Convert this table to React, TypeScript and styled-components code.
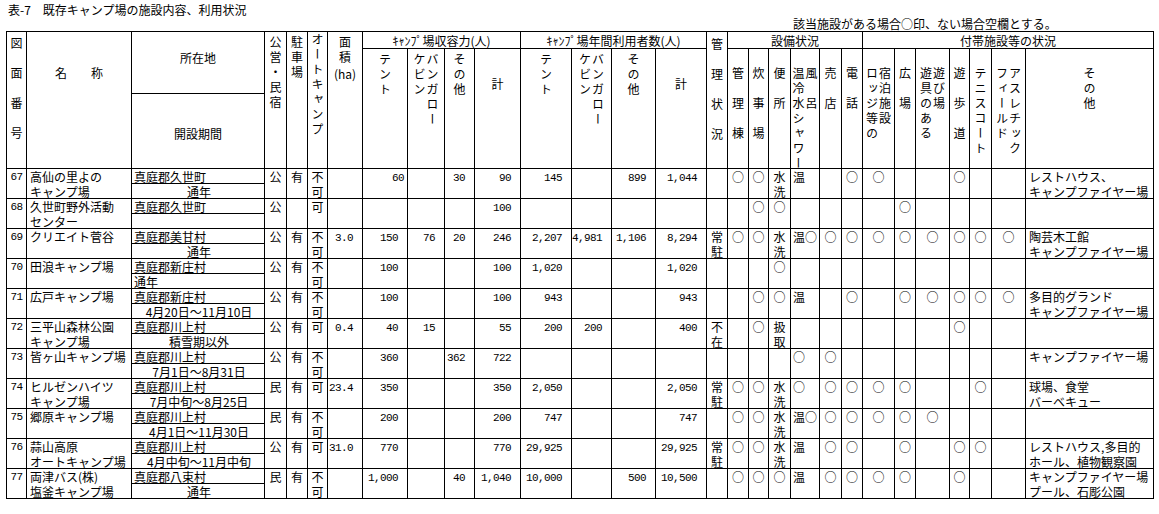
import React from 'react'
import styled, { createGlobalStyle } from 'styled-components'

const GlobalStyle = createGlobalStyle`
    body {
        margin: 0;
        background: #fff;
        color: #000;
        font-family: "Noto Sans CJK JP", "Noto Sans", sans-serif;
        font-size: 12px;
    }
`

const Page = styled.div`
    padding: 2px 0 0 6px;
`

const Title = styled.div`
    line-height: 15px;
    padding-left: 2px;
    white-space: pre;
`

const Note = styled.div`
    line-height: 13px;
    padding-left: 787px;
    margin-bottom: 1px;
`

const Table = styled.table`
    border-collapse: collapse;
    table-layout: fixed;
    width: 1147px;
`

const Row = styled.tr<{ $h: number }>`
    height: ${p => p.$h}px;
`

const Th = styled.th`
    border: 1px solid #000;
    padding: 0;
    vertical-align: top;
    font-weight: normal;
    font-size: 12px;
`

const HeadBox = styled.div<{ $pt: number }>`
    height: 0;
    overflow: visible;
    display: flex;
    flex-direction: column;
    align-items: center;
    padding-top: ${p => p.$pt}px;
`

// vertical heading text, pitch = distance between characters
const VText = styled.span<{ $pitch?: number }>`
    writing-mode: vertical-rl;
    text-align: start;
    letter-spacing: ${p => (p.$pitch ?? 15) - 12}px;
    line-height: 13px;
    white-space: pre;
`

const HText = styled.span<{ $mt?: number }>`
    line-height: 12px;
    margin-top: ${p => p.$mt ?? 0}px;
    white-space: pre;
`

const Td = styled.td<{ $align?: 'left' | 'center' | 'right'; $pl?: number }>`
    border: 1px solid #000;
    padding: 0 0 0 ${p => p.$pl ?? 0}px;
    vertical-align: top;
    text-align: ${p => p.$align ?? 'center'};
`

const NumCell = styled(Td)`
    padding: 2px 3px 0 0;
    text-align: right;
    font-family: "Liberation Mono", monospace;
    font-size: 11px;
    letter-spacing: -0.6px;
`

const NoCell = styled(Td)`
    padding-top: 1px;
    font-family: "Liberation Mono", monospace;
    font-size: 11px;
    letter-spacing: -0.6px;
`

const Lines = styled.div`
    height: 0;
    overflow: visible;
    line-height: 15px;
    white-space: pre;
`

const widths = [20, 105, 133, 22, 21, 20, 35, 45, 37, 30, 46, 51, 40, 44, 51, 21, 21, 20, 22, 29, 22, 21, 32, 21, 34, 20, 22, 34, 128]

const O = '○'

interface Site {
    no: string
    name: string
    loc: string
    period: string
    periodLeft?: boolean
    kind: string
    park: string
    auto: string
    area: string
    cap: string[]
    use: string[]
    mgmt: string
    fac: string[]
    other: string
}

// fac: 管理棟 炊事場 便所 温冷水/風呂 売店 電話 ロッジ 広場 遊具 遊歩道 テニス アスレチック
const sites: Site[] = [
    { no: '67', name: '高仙の里よの\nキャンプ場', loc: '真庭郡久世町', period: '通年', kind: '公', park: '有', auto: '不\n可', area: '',
        cap: ['60', '', '30 ', '90 '], use: ['145 ', '', '899 ', '1,044 '], mgmt: '',
        fac: [O, O, '水\n洗', '温', '', O, O, '', '', O, '', ''], other: 'レストハウス、\nキャンプファイヤー場' },
    { no: '68', name: '久世町野外活動\nセンター', loc: '真庭郡久世町', period: '', kind: '公', park: '', auto: '可', area: '',
        cap: ['', '', '', '100 '], use: ['', '', '', ''], mgmt: '',
        fac: ['', O, O, '', '', '', '', O, '', '', '', ''], other: '' },
    { no: '69', name: 'クリエイト菅谷', loc: '真庭郡美甘村', period: '通年', kind: '公', park: '有', auto: '不\n可', area: '3.0 ',
        cap: ['150 ', '76 ', '20 ', '246 '], use: ['2,207 ', '4,981 ', '1,106 ', '8,294 '], mgmt: '常\n駐',
        fac: [O, O, '水\n洗', '温○', O, O, O, O, O, O, O, O], other: '陶芸木工館\nキャンプファイヤー場' },
    { no: '70', name: '田浪キャンプ場', loc: '真庭郡新庄村', period: '通年', periodLeft: true, kind: '公', park: '有', auto: '不\n可', area: '',
        cap: ['100 ', '', '', '100 '], use: ['1,020 ', '', '', '1,020 '], mgmt: '',
        fac: ['', '', O, '', '', '', '', '', '', '', '', ''], other: '' },
    { no: '71', name: '広戸キャンプ場', loc: '真庭郡新庄村', period: '4月20日～11月10日', kind: '公', park: '有', auto: '不\n可', area: '',
        cap: ['100 ', '', '', '100 '], use: ['943 ', '', '', '943 '], mgmt: '',
        fac: ['', O, O, '温', '', O, '', O, O, O, O, O], other: '多目的グランド\nキャンプファイヤー場' },
    { no: '72', name: '三平山森林公園\nキャンプ場', loc: '真庭郡川上村', period: '積雪期以外', kind: '公', park: '有', auto: '可', area: '0.4 ',
        cap: ['40 ', '15 ', '', '55 '], use: ['200 ', '200 ', '', '400 '], mgmt: '不\n在',
        fac: ['', O, '扱\n取', '', '', '', '', '', '', O, '', ''], other: '' },
    { no: '73', name: '皆ヶ山キャンプ場', loc: '真庭郡川上村', period: '7月1日～8月31日', kind: '公', park: '有', auto: '不\n可', area: '',
        cap: ['360 ', '', '362 ', '722 '], use: ['', '', '', ''], mgmt: '',
        fac: ['', '', '', O, O, '', '', '', '', '', '', ''], other: 'キャンプファイヤー場' },
    { no: '74', name: 'ヒルゼンハイツ\nキャンプ場', loc: '真庭郡川上村', period: '7月中旬～8月25日', kind: '民', park: '有', auto: '可', area: '23.4 ',
        cap: ['350 ', '', '', '350 '], use: ['2,050 ', '', '', '2,050 '], mgmt: '常\n駐',
        fac: [O, O, '水\n洗', O, O, O, O, O, '', '', O, ''], other: '球場、食堂\nバーベキュー' },
    { no: '75', name: '郷原キャンプ場', loc: '真庭郡川上村', period: '4月1日～11月30日', kind: '民', park: '有', auto: '不\n可', area: '',
        cap: ['200 ', '', '', '200 '], use: ['747 ', '', '', '747 '], mgmt: '',
        fac: [O, O, '水\n洗', '温○', O, O, O, O, O, '', '', ''], other: '' },
    { no: '76', name: '蒜山高原\nオートキャンプ場', loc: '真庭郡川上村', period: '4月中旬～11月中旬', kind: '公', park: '有', auto: '可', area: '31.0 ',
        cap: ['770 ', '', '', '770 '], use: ['29,925 ', '', '', '29,925 '], mgmt: '常\n駐',
        fac: [O, O, '水\n洗', '温', O, O, '', O, '', O, O, ''], other: 'レストハウス,多目的\nホール、植物観察園' },
    { no: '77', name: '両津バス(株)\n塩釜キャンプ場', loc: '真庭郡八束村', period: '通年', kind: '民', park: '有', auto: '不\n可', area: '',
        cap: ['1,000 ', '', '40 ', '1,040 '], use: ['10,000 ', '', '500 ', '10,500 '], mgmt: '',
        fac: [O, O, O, '温', O, O, O, O, '', O, '', ''], other: 'キャンプファイヤー場\nプール、石彫公園' },
]

// sub headings under the two count groups
const countHeads = (
    <>
        <Th rowSpan={2}><HeadBox $pt={4}><VText>テント</VText></HeadBox></Th>
        <Th rowSpan={2}><HeadBox $pt={4}><VText>{'バンガロー\nケビン'}</VText></HeadBox></Th>
        <Th rowSpan={2}><HeadBox $pt={4}><VText>その他</VText></HeadBox></Th>
        <Th rowSpan={2}><HeadBox $pt={29}><HText>計</HText></HeadBox></Th>
    </>
)

const facHeads: { text: string; pitch: number }[] = [
    { text: '管理棟', pitch: 30 },
    { text: '炊事場', pitch: 30 },
    { text: '便所', pitch: 30 },
    { text: '風　呂\n温冷水シャワー', pitch: 15 },
    { text: '売店', pitch: 30 },
    { text: '電話', pitch: 30 },
    { text: '宿泊施設\nロッジ等の', pitch: 15 },
    { text: '広場', pitch: 30 },
    { text: '遊び場\n遊具のある', pitch: 15 },
    { text: '遊歩道', pitch: 30 },
    { text: 'テニスコート', pitch: 15 },
    { text: 'アスレチック\nフィールド', pitch: 15 },
    { text: 'その他', pitch: 15 },
]

const SiteRows: React.FC<{ site: Site }> = ({ site }) => (
    <>
        <Row $h={15}>
            <NoCell rowSpan={2}><Lines>{site.no}</Lines></NoCell>
            <Td rowSpan={2} $align="left" $pl={3}><Lines>{site.name}</Lines></Td>
            <Td $align="left" $pl={2}><Lines>{site.loc}</Lines></Td>
            <Td rowSpan={2}><Lines>{site.kind}</Lines></Td>
            <Td rowSpan={2}><Lines>{site.park}</Lines></Td>
            <Td rowSpan={2}><Lines>{site.auto}</Lines></Td>
            <NumCell rowSpan={2}><Lines>{site.area}</Lines></NumCell>
            {site.cap.map((v, i) => <NumCell key={'c' + i} rowSpan={2}><Lines>{v}</Lines></NumCell>)}
            {site.use.map((v, i) => <NumCell key={'u' + i} rowSpan={2}><Lines>{v}</Lines></NumCell>)}
            <Td rowSpan={2}><Lines>{site.mgmt}</Lines></Td>
            {site.fac.map((v, i) =>
                i === 3
                    ? <Td key={'f' + i} rowSpan={2} $align="left" $pl={2}><Lines>{v}</Lines></Td>
                    : <Td key={'f' + i} rowSpan={2}><Lines>{v}</Lines></Td>
            )}
            <Td rowSpan={2} $align="left" $pl={3}><Lines>{site.other}</Lines></Td>
        </Row>
        <Row $h={15}>
            <Td $align={site.periodLeft ? 'left' : 'center'} $pl={2}><Lines>{site.period}</Lines></Td>
        </Row>
    </>
)

export default function App() {
    return (
        <Page>
            <GlobalStyle />
            <Title>表-7　既存キャンプ場の施設内容、利用状況</Title>
            <Note>該当施設がある場合○印、ない場合空欄とする。</Note>
            <Table>
                <colgroup>
                    {widths.map((w, i) => <col key={i} style={{ width: w }} />)}
                </colgroup>
                <thead>
                    <Row $h={17}>
                        <Th rowSpan={3}><HeadBox $pt={5}><VText $pitch={30}>図面番号</VText></HeadBox></Th>
                        <Th rowSpan={3}><HeadBox $pt={35}><HText>名　　称</HText></HeadBox></Th>
                        <Th rowSpan={2}><HeadBox $pt={20}><HText>所在地</HText></HeadBox></Th>
                        <Th rowSpan={3}><HeadBox $pt={4}><VText>公営・民宿</VText></HeadBox></Th>
                        <Th rowSpan={3}><HeadBox $pt={4}><VText>駐車場</VText></HeadBox></Th>
                        <Th rowSpan={3}><HeadBox $pt={1}><VText>オートキャンプ</VText></HeadBox></Th>
                        <Th rowSpan={3}>
                            <HeadBox $pt={4}>
                                <VText>面積</VText>
                                <HText $mt={2}>(ha)</HText>
                            </HeadBox>
                        </Th>
                        <Th colSpan={4}><HeadBox $pt={3}><HText>ｷｬﾝﾌﾟ場収容力(人)</HText></HeadBox></Th>
                        <Th colSpan={4}><HeadBox $pt={3}><HText>ｷｬﾝﾌﾟ場年間利用者数(人)</HText></HeadBox></Th>
                        <Th rowSpan={3}><HeadBox $pt={6}><VText $pitch={30}>管理状況</VText></HeadBox></Th>
                        <Th colSpan={6}><HeadBox $pt={3}><HText>設備状況</HText></HeadBox></Th>
                        <Th colSpan={7}><HeadBox $pt={3}><HText>付帯施設等の状況</HText></HeadBox></Th>
                    </Row>
                    <Row $h={45}>
                        {countHeads}
                        {countHeads}
                        {facHeads.map(h => (
                            <Th key={h.text} rowSpan={2}>
                                <HeadBox $pt={18}><VText $pitch={h.pitch}>{h.text}</VText></HeadBox>
                            </Th>
                        ))}
                    </Row>
                    <Row $h={75}>
                        <Th><HeadBox $pt={34}><HText>開設期間</HText></HeadBox></Th>
                    </Row>
                </thead>
                <tbody>
                    {sites.map(s => <SiteRows key={s.no} site={s} />)}
                </tbody>
            </Table>
        </Page>
    )
}
